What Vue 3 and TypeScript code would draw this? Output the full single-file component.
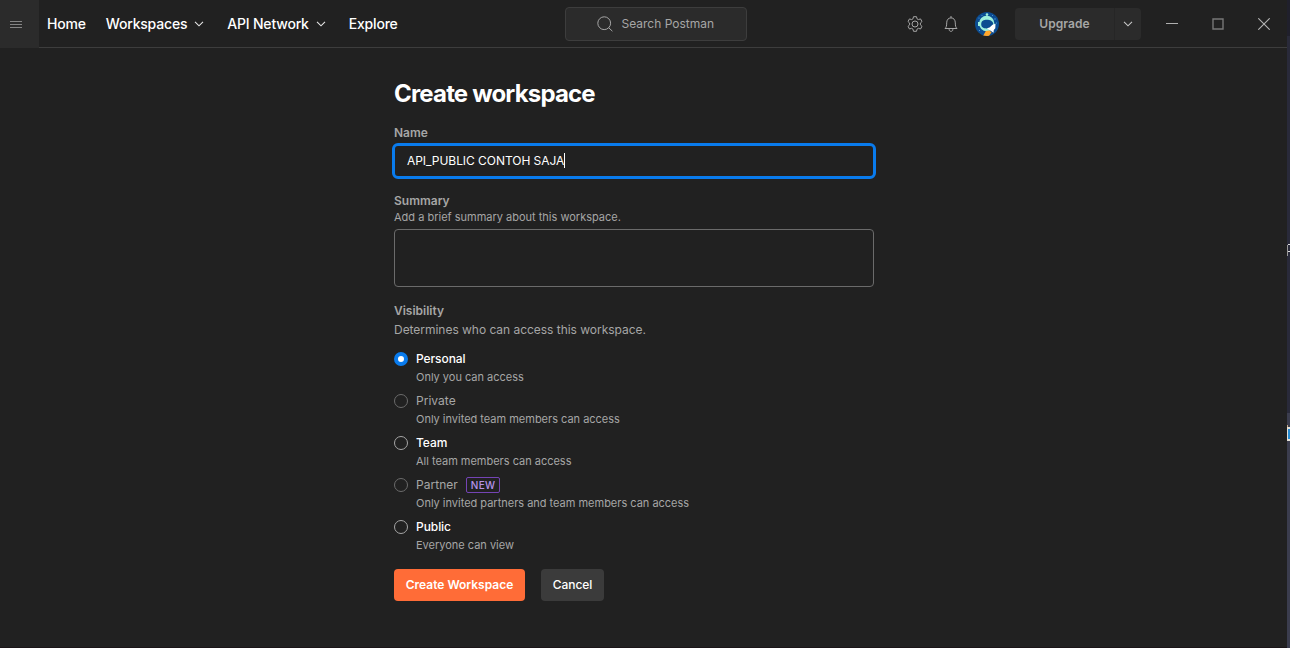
<script setup lang="ts">
import { ref } from 'vue'

interface Option {
  id: string
  label: string
  hint: string
  disabled?: boolean
  badge?: string
}

const name = ref('API_PUBLIC CONTOH SAJA')
const selected = ref('personal')
const options: Option[] = [
  { id: 'personal', label: 'Personal', hint: 'Only you can access' },
  { id: 'private', label: 'Private', hint: 'Only invited team members can access', disabled: true },
  { id: 'team', label: 'Team', hint: 'All team members can access' },
  { id: 'partner', label: 'Partner', hint: 'Only invited partners and team members can access', disabled: true, badge: 'NEW' },
  { id: 'public', label: 'Public', hint: 'Everyone can view' },
]
const links = [
  { text: 'Home', menu: false },
  { text: 'Workspaces', menu: true },
  { text: 'API Network', menu: true },
  { text: 'Explore', menu: false },
]

function choose(option: Option) {
  if (!option.disabled) selected.value = option.id
}
</script>

<template>
  <div class="screen">
    <div class="window">
      <header class="bar">
        <div class="left">
          <button class="burger" aria-label="Menu">
            <svg width="12" height="7" viewBox="0 0 12 7"><path d="M0 .5h12M0 3.500h12M0 6.500h12" stroke="#858585" /></svg>
          </button>
          <nav class="links">
            <a v-for="link in links" :key="link.text" class="link">
              {{ link.text }}
              <svg v-if="link.menu" class="chev" width="10" height="6" viewBox="0 0 10 6"><path d="M1 .8l4 4 4-4" fill="none" stroke="#e6e6e6" stroke-width="1.1" /></svg>
            </a>
          </nav>
        </div>
        <div class="search">
          <svg width="16" height="16" viewBox="0 0 16 16" fill="none" stroke="#a6a6a6"><circle cx="7.2" cy="7.2" r="6.4" /><path d="M11.8 11.8l3.6 3.4" /></svg>
          <span>Search Postman</span>
        </div>
        <div class="right">
          <svg class="gear" width="16" height="16" viewBox="0 0 16 16" fill="none" stroke="#a6a6a6" stroke-linejoin="round">
            <path d="M6.5 .7h3l.5 2.1 1.4.8 2.1-.7 1.5 2.6-1.6 1.5v1.9l1.6 1.5-1.5 2.6-2.1-.7-1.4.9-.5 2.1h-3L6 13.200l-1.400-.9-2.100.7L1 10.400l1.600-1.500V7L1 5.500l1.500-2.600 2.100.7L6 2.800z" />
            <circle cx="8" cy="8" r="3" />
          </svg>
          <svg class="bell" width="14" height="16" viewBox="0 0 14 16" fill="none" stroke="#a6a6a6">
            <path d="M1 12.500h12c-1.300-1.300-1.700-2.500-1.700-5.600C11.300 3.800 9.700 1.900 7 1.900S2.700 3.800 2.700 6.900C2.700 10 2.300 11.200 1 12.500zM7 0v1.900M5.200 12.500v1.200c0 2.200 3.600 2.200 3.600 0v-1.200" />
          </svg>
          <svg class="avatar" width="24" height="24" viewBox="0 0 24 24">
            <defs><clipPath id="disc"><circle cx="12" cy="12" r="12" /></clipPath></defs>
            <g clip-path="url(#disc)">
              <rect width="24" height="24" fill="#0b4c91" />
              <g fill="#5fa3d8"><circle cx="4" cy="6" r=".6" /><circle cx="7" cy="3.500" r=".5" /><circle cx="20" cy="7" r=".7" /><circle cx="4.500" cy="18.500" r=".6" /><circle cx="17.500" cy="3.500" r=".5" /><circle cx="21.500" cy="11" r=".6" /></g>
              <circle cx="11.700" cy="11.500" r="7.700" fill="#9df0dc" />
              <circle cx="12" cy="2.600" r="1.300" fill="#9df0dc" />
              <path d="M3 10h2v4H3z" fill="#9df0dc" />
              <path d="M6.200 12c0-3 2.400-4.200 5.600-4.200s6.400 1.400 6.400 4.200-2.800 4.400-6.600 4.400S6.200 15 6.200 12z" fill="#0b4c91" />
              <path d="M12 16.200l2.500-.7 3-2.800 3-1-.2 4.500-1.500 1.800-.3 2.700-2.500-1.700z" fill="#fff" />
              <path d="M8 24l2.800-5 3.500-.6 2.300 1.900L14 24z" fill="#ffa62b" />
            </g>
          </svg>
          <div class="upgrade">
            <span class="up">Upgrade</span>
            <span class="drop"><svg width="10" height="6" viewBox="0 0 10 6"><path d="M1 .8l4 4 4-4" fill="none" stroke="#c8c8c8" stroke-width="1.100" /></svg></span>
          </div>
          <svg class="min" width="12" height="12" viewBox="0 0 12 12"><path d="M0 5.500h12" stroke="#b0b0b0" /></svg>
          <svg class="max" width="12" height="12" viewBox="0 0 12 12"><path d="M1 1h10v10H1z" fill="none" stroke="#777" stroke-width="1.400" /></svg>
          <svg class="close" width="12" height="12" viewBox="0 0 12 12"><path d="M.3.3l11.400 11.400M11.700.3L.3 11.700" stroke="#b5b5b5" stroke-width="1.100" /></svg>
        </div>
      </header>

      <main class="form">
        <h1>Create workspace</h1>
        <div class="label name-label">Name</div>
        <div class="name"><span>{{ name }}</span><i class="caret"></i></div>
        <div class="label summary-label">Summary</div>
        <div class="help">Add a brief summary about this workspace.</div>
        <div class="summary"></div>
        <div class="label vis-label">Visibility</div>
        <div class="desc">Determines who can access this workspace.</div>
        <ul class="options">
          <li v-for="option in options" :key="option.id" :class="{ off: option.disabled, on: option.id === selected }" @click="choose(option)">
            <i class="radio"></i>
            <div>
              <div class="title"><span>{{ option.label }}</span><b v-if="option.badge" class="badge">{{ option.badge }}</b></div>
              <div class="hint">{{ option.hint }}</div>
            </div>
          </li>
        </ul>
        <div class="actions">
          <button class="primary">Create Workspace</button>
          <button class="cancel">Cancel</button>
        </div>
      </main>
    </div>
    <aside class="behind">
      <svg width="3" height="648" viewBox="0 0 3 648" shape-rendering="crispEdges">
        <rect width="3" height="36" fill="#20202c" />
        <rect y="36" width="3" height="377" fill="#292a3a" />
        <rect y="413" width="3" height="235" fill="#3b3d4e" />
        <path d="M1 244.500h2M1 251.500h2" stroke="#ddd" />
        <path d="M.5 245v11" stroke="#999" />
        <rect y="427" width="3" height="14" fill="#e5e0d8" />
        <rect x="1" y="429" width="2" height="10" fill="#268bd2" />
        <rect y="425" width="1" height="2" fill="#c8a982" />
      </svg>
    </aside>
  </div>
</template>

<style>
html, body { background: #212121; overflow: hidden; }
</style>

<style scoped>
* { box-sizing: border-box; }
.screen { display: flex; width: 1290px; height: 648px; font-family: Inter, "Liberation Sans", sans-serif; background: #212121; color: #fff; }
.window { width: 1287px; height: 648px; border-bottom: 1px solid #1b1518; }
.behind { width: 3px; height: 648px; }
.behind svg { display: block; }
button { font: inherit; border: 0; padding: 0; color: inherit; }
svg { display: block; flex: none; }
.bar { height: 48px; display: flex; align-items: center; border-bottom: 1px solid #3d3d3d; }
.left { width: 565px; display: flex; align-items: center; }
.burger { width: 39px; height: 48px; margin-bottom: -1px; background: #2b2b2b; display: flex; align-items: center; padding: 1px 0 0 10px; }
.links { display: flex; padding-left: 8px; gap: 20px; }
.link { display: flex; align-items: center; font-size: 14px; line-height: 20px; font-weight: 500; letter-spacing: -.19px; white-space: nowrap; }
.chev { margin: 1px 3px 0 7px; }
.search { width: 182px; height: 34px; margin-top: 1px; border: 1px solid #3d3d3d; border-radius: 4px; background: #2b2b2b; color: #a6a6a6; display: flex; align-items: center; padding-left: 31px; gap: 8.500px; font-size: 12px; letter-spacing: 0; }
.search span { padding-bottom: 2px; }
.right { display: flex; align-items: center; padding-left: 160px; }
.bell { margin-left: 21px; }
.avatar { margin-left: 17px; }
.upgrade { display: flex; width: 126px; height: 32px; margin-left: 16px; background: #2b2b2b; border-radius: 4px; font-size: 12px; font-weight: 600; letter-spacing: .05px; color: #a6a6a6; }
.up { width: 100px; border-right: 1px solid #262626; display: flex; align-items: center; justify-content: center; }
.drop { flex: 1; display: flex; align-items: center; justify-content: center; }
.min { margin-left: 25px; }
.max, .close { margin-left: 34px; }
.form { width: 480px; margin-left: 394px; padding-top: 30px; }
h1 { margin: 0; font-size: 24px; line-height: 32px; font-weight: 650; letter-spacing: -.82px; }
.label { font-size: 12px; line-height: 16px; font-weight: 600; color: #a6a6a6; }
.name-label { margin-top: 15px; }
.name { width: 484px; height: 36px; margin: 2px -2px 0; border: 3px solid #097bed; border-radius: 6px; display: flex; align-items: center; padding-left: 12px; font-size: 12px; padding-bottom: 1px; letter-spacing: -.05px; }
.caret { width: 1px; height: 15px; background: #fff; }
.summary-label { margin-top: 14px; }
.help { font-size: 11px; line-height: 16px; color: #a6a6a6; }
.summary { height: 58px; margin-top: 4px; border: 1px solid #6b6b6b; border-radius: 4px; }
.vis-label { margin-top: 16px; }
.desc { margin-top: 2px; font-size: 12px; line-height: 18px; color: #a6a6a6; letter-spacing: -.03px; }
.options { list-style: none; margin: 10px 0 0; padding: 0; }
.options li { height: 42px; display: flex; gap: 8px; }
.radio { width: 14px; height: 14px; margin-top: 3px; border: 1px solid #a6a6a6; border-radius: 50%; }
.title { height: 20px; display: flex; align-items: center; font-size: 12px; font-weight: 500; letter-spacing: -.07px; }
.title span { padding-bottom: 2px; }
.hint { font-size: 11px; line-height: 16px; color: #a6a6a6; letter-spacing: -.01px; }
.off .radio { border-color: #6b6b6b; }
.off .title { color: #a6a6a6; font-weight: 400; letter-spacing: 0.03px; }
.on .radio { border: 4px solid #097bed; background: #fff; }
.badge { height: 16px; margin-left: 8px; padding: 0 4px; border: 1px solid #7444b5; border-radius: 2px; font-size: 10px; line-height: 15px; font-weight: 500; color: #b593e8; letter-spacing: .3px; }
.actions { display: flex; gap: 16px; margin-top: 10px; font-size: 12px; }
.primary, .cancel { height: 32px; padding-bottom: 2px; border-radius: 4px; }
.primary { width: 131px; background: #ff6c37; font-weight: 600; }
.cancel { width: 63px; background: #3b3b3b; font-weight: 500; letter-spacing: -.07px; }
</style>
